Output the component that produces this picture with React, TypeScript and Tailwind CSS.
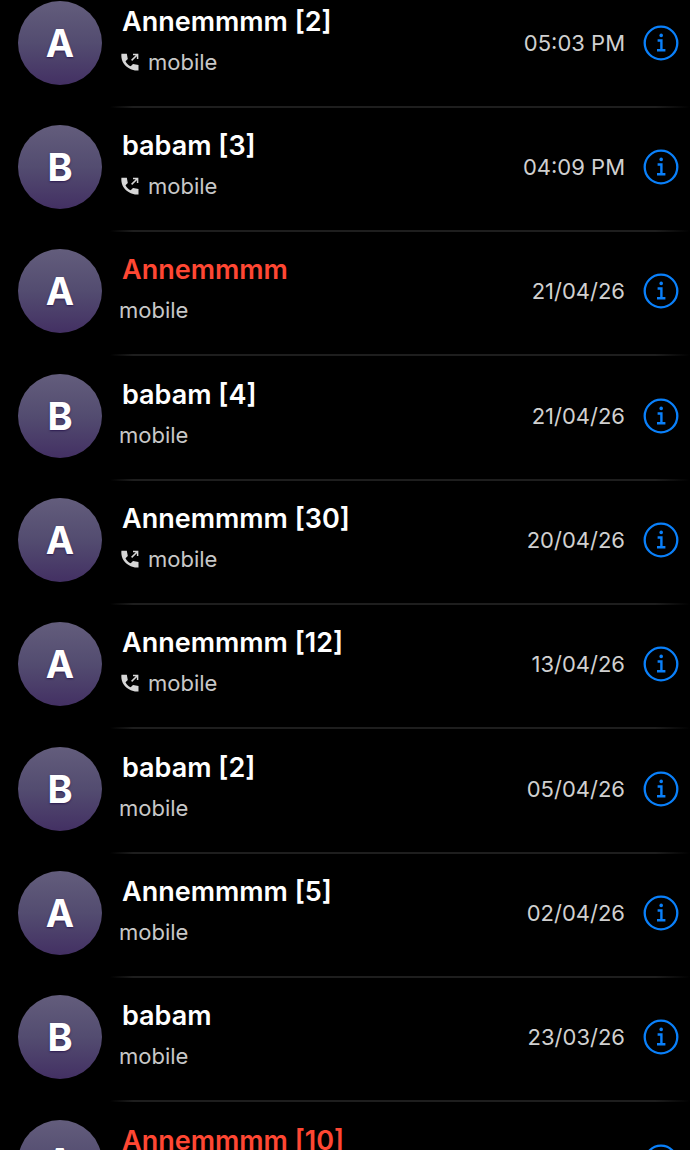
import clsx from "clsx";

type Call = {
  name: string;
  count?: number;
  time: string;
  missed?: boolean;
  outgoing?: boolean;
};

const calls: Call[] = [
  { name: "Annemmmm", count: 2, time: "05:03 PM", outgoing: true },
  { name: "babam", count: 3, time: "04:09 PM", outgoing: true },
  { name: "Annemmmm", time: "21/04/26", missed: true },
  { name: "babam", count: 4, time: "21/04/26" },
  { name: "Annemmmm", count: 30, time: "20/04/26", outgoing: true },
  { name: "Annemmmm", count: 12, time: "13/04/26", outgoing: true },
  { name: "babam", count: 2, time: "05/04/26" },
  { name: "Annemmmm", count: 5, time: "02/04/26" },
  { name: "babam", time: "23/03/26" },
  { name: "Annemmmm", count: 10, time: "22/03/26", missed: true },
];

const OutgoingIcon = () => (
  <svg viewBox="0 0 18 18" className="size-[18px]" aria-hidden="true">
    <path
      d="M0.400 0.800h5.400l1 5.100-2.300 2.300c1.300 2.400 2.800 3.900 5.200 5.100l2.300-2.300 5.500 1.100v5.300c-1.600.3-3.600.1-5.300-.4C5.400 15.300 1.200 10.400.5 4.800.3 3.500.3 2 .4.800z"
      fill="#d6d6d6"
    />
    <path
      d="M10.600 7.400 16.300 1.700M12 1.500h4.600v4.600"
      fill="none"
      stroke="#d6d6d6"
      strokeWidth="1.500"
    />
  </svg>
);

const InfoIcon = () => (
  <svg viewBox="0 0 36 36" className="size-9" fill="none" aria-hidden="true">
    <circle cx="18" cy="18" r="16.300" stroke="#0a80fa" strokeWidth="2.300" />
    <circle cx="18.200" cy="10.400" r="1.800" fill="#0a80fa" />
    <path
      d="M14.600 15.500h3.800v9.500M14 25.200h8.400"
      stroke="#0a80fa"
      strokeWidth="2.400"
    />
  </svg>
);

const CallRow = ({ name, count, time, missed, outgoing }: Call) => {
  return (
    <li className="nth-[3n]:mb-px">
      <div className="flex items-start pt-[17px] pb-[21px] pl-[18px] pr-[11px]">
        <div className="flex size-[84px] shrink-0 items-center justify-center rounded-full bg-linear-to-b from-[#635d7c] via-[#534c70] to-[#433063] text-[38px] font-bold text-white text-shadow-[0_1px_2px_#2c1b50]">
          {name[0].toUpperCase()}
        </div>
        <div className="ml-[17px] min-w-0 flex-1 pt-px">
          <h2
            className={clsx(
              "truncate pl-[3px] text-[27px] font-semibold leading-10",
              missed ? "text-[#ff4733]" : "text-white"
            )}
          >
            {name}
            {count && ` [${count}]`}
          </h2>
          <p className="flex items-center gap-[9px] text-[22px] leading-10 text-[#c8c8c8]">
            {outgoing && (
              <span className="pl-[2px]">
                <OutgoingIcon />
              </span>
            )}
            mobile
          </p>
        </div>
        <div className="flex h-[84px] shrink-0 items-center gap-[18px]">
          <time className="text-[22px] text-[#d0d0d0]">{time}</time>
          <button type="button" aria-label="Call details">
            <InfoIcon />
          </button>
        </div>
      </div>
      <div className="ml-[110px] h-[2px] bg-[linear-gradient(to_right,transparent,#1e1e1e_4%,#1e1e1e_94%,transparent)]" />
    </li>
  );
};

const App = () => {
  return (
    <main className="h-screen overflow-hidden bg-black font-['Inter',sans-serif]">
      <ul className="-mt-4">
        {calls.map((call, i) => (
          <CallRow key={i} {...call} />
        ))}
      </ul>
    </main>
  );
};

export default App;
